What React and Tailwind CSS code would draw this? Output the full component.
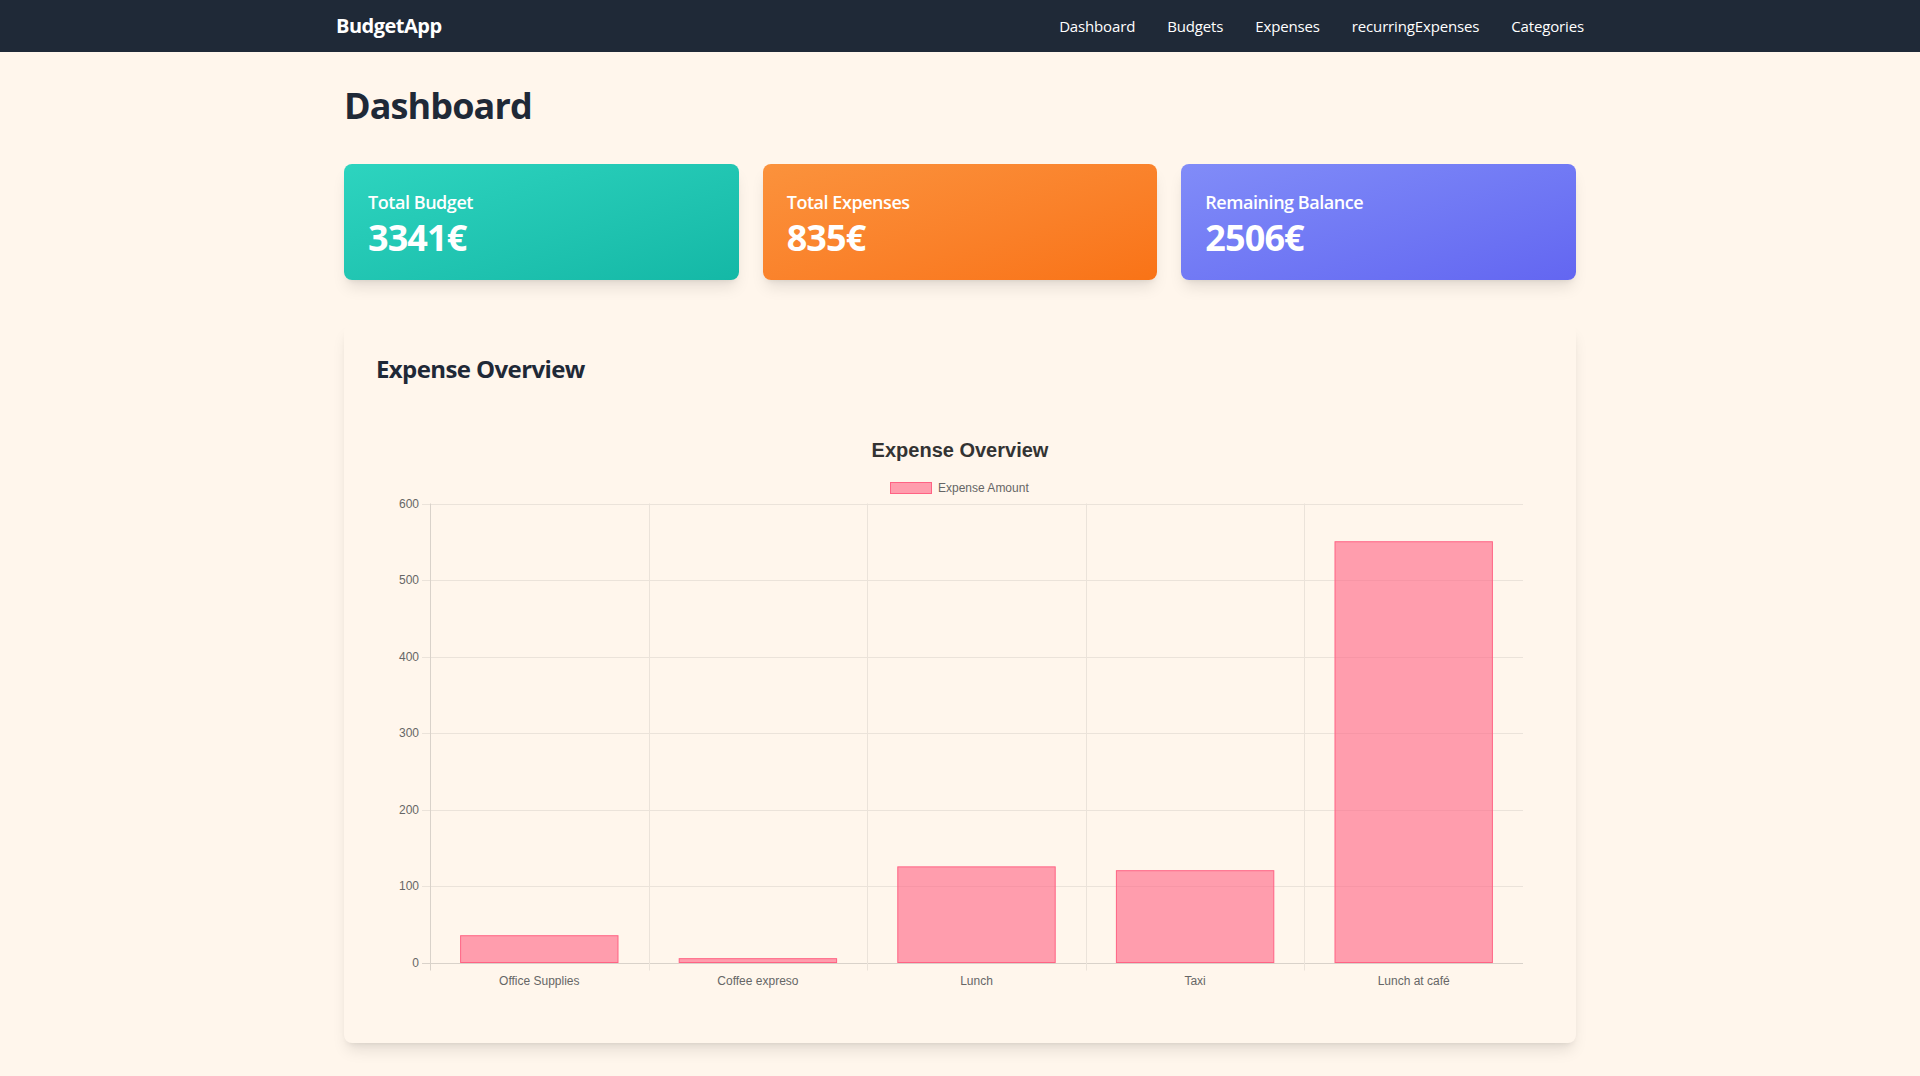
import React from "react";

const navLinks = ["Dashboard", "Budgets", "Expenses", "recurringExpenses", "Categories"];

const expenses = [
  { name: "Office Supplies", amount: 35 },
  { name: "Coffee expreso", amount: 5 },
  { name: "Lunch", amount: 125 },
  { name: "Taxi", amount: 120 },
  { name: "Lunch at café", amount: 550 },
];

const summary = [
  { label: "Total Budget", value: "3341€", bg: "bg-gradient-to-br from-[#2dd4bf] to-[#14b8a6]" },
  { label: "Total Expenses", value: "835€", bg: "bg-gradient-to-br from-[#fb923c] to-[#f97316]" },
  { label: "Remaining Balance", value: "2506€", bg: "bg-gradient-to-br from-[#818cf8] to-[#6366f1]" },
];

// chart geometry (svg coords)
const W = 1168;
const H = 607;
const left = 54;
const right = 1147;
const top = 99.5;
const bottom = 558.5;
const max = 600;

const ExpenseChart = () => {
  const catW = (right - left) / expenses.length;
  const y = (v) => bottom - (v / max) * (bottom - top);
  const ticks = [0, 100, 200, 300, 400, 500, 600];

  return (
    <svg width={W} height={H} className="block" style={{ fontFamily: '"Liberation Sans", Arial, sans-serif' }}>
      {/* title */}
      <text x={W / 2} y={53} textAnchor="middle" fontSize="20" fontWeight="bold" fill="#333">
        Expense Overview
      </text>

      {/* legend */}
      <rect x={514.5} y={78.5} width={41} height={11} fill="rgba(255,99,132,0.6)" stroke="rgb(255,99,132)" strokeWidth="1" />
      <text x={562} y={88} fontSize="12" fill="#666">
        Expense Amount
      </text>

      {/* horizontal grid + y labels */}
      {ticks.map((t) => (
        <g key={t}>
          <line
            x1={left - 8}
            x2={right}
            y1={Math.round(y(t)) + 0.5}
            y2={Math.round(y(t)) + 0.5}
            stroke={t === 0 ? "#d9d2ca" : "#ebe3da"}
            strokeWidth="1"
          />
          <text x={43} y={y(t) + 4} textAnchor="end" fontSize="12" fill="#666">
            {t}
          </text>
        </g>
      ))}

      {/* vertical grid */}
      {expenses.map((_, i) => (
        <line
          key={i}
          x1={Math.round(left + i * catW) + 0.5}
          x2={Math.round(left + i * catW) + 0.5}
          y1={top}
          y2={bottom + 8}
          stroke={i === 0 ? "#d9d2ca" : "#ebe3da"}
          strokeWidth="1"
        />
      ))}

      {/* bars */}
      {expenses.map((e, i) => {
        const bw = catW * 0.72;
        const bx = left + i * catW + (catW - bw) / 2;
        return (
          <g key={e.name}>
            <rect
              x={bx}
              y={y(e.amount)}
              width={bw}
              height={bottom - y(e.amount)}
              fill="rgba(255,99,132,0.6)"
              stroke="rgb(255,99,132)"
              strokeWidth="1"
            />
            <text x={left + i * catW + catW / 2} y={581} textAnchor="middle" fontSize="12" fill="#666">
              {e.name}
            </text>
          </g>
        );
      })}
    </svg>
  );
};

const App = () => {
  return (
    <div className="min-h-screen bg-[#fff6ec]" style={{ fontFamily: '"Open Sans", "Noto Sans", sans-serif' }}>
      {/* NAVBAR */}
      <nav className="bg-[#1f2937] text-white">
        <div className="max-w-7xl mx-auto px-4 py-3 flex items-center justify-between">
          <div className="text-xl font-bold leading-7 tracking-tight">BudgetApp</div>
          <div className="flex items-center gap-8">
            {navLinks.map((link) => (
              <a key={link} href="#" className="text-[15px] text-white tracking-[-0.01em]">
                {link}
              </a>
            ))}
          </div>
        </div>
      </nav>

      {/* MAIN */}
      <main className="max-w-7xl mx-auto px-6 pt-[34px] pb-8">
        <h1 className="text-4xl font-bold text-[#1f2937] mb-[38px] tracking-tight">Dashboard</h1>

        {/* SUMMARY CARDS */}
        <div className="grid grid-cols-3 gap-6 mb-11">
          {summary.map((card) => (
            <div key={card.label} className={`${card.bg} rounded-lg shadow-lg px-6 pt-6 pb-[22px] text-white`}>
              <div className="text-lg font-semibold leading-7 tracking-tight">{card.label}</div>
              <div className="text-4xl font-bold leading-10 tracking-tight mt-0.5">{card.value}</div>
            </div>
          ))}
        </div>

        {/* CHART */}
        <div className="bg-[#fff6ec] rounded-lg shadow-lg p-8">
          <h2 className="text-2xl font-bold text-[#1f2937] -mt-[3px] mb-[19px] tracking-tight">Expense Overview</h2>
          <ExpenseChart />
        </div>
      </main>
    </div>
  );
};

export default App;
